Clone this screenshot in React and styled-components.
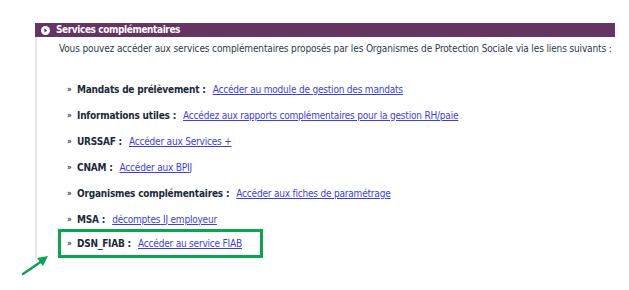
import React from 'react'
import styled, { createGlobalStyle } from 'styled-components'

const GlobalStyle = createGlobalStyle`
  body {
    margin: 0;
    background: #fff;
    font-family: "DejaVu Sans Condensed", "DejaVu Sans", Verdana, sans-serif;
    font-size: 10px;
    letter-spacing: -0.2px;
  }
`

const Page = styled.div`
  position: relative;
  width: 629px;
  height: 290px;
  padding: 23px 0 0 35px;
  box-sizing: border-box;
`

const Header = styled.div`
  width: 580px;
  height: 14px;
  background-color: #653462;
  color: #fff;
  font-weight: bold;
  letter-spacing: -0.4px;
  display: flex;
  align-items: center;
  gap: 6px;
  padding-left: 6px;
  box-sizing: border-box;
`

const HeaderTitle = styled.span`
  line-height: 14px;
`

const Section = styled.div`
  border-left: 2px solid #e9e3ef;
  padding: 5px 0 0 22px;
  height: 221px;
  box-sizing: border-box;
`

const Intro = styled.p`
  margin: 0;
  line-height: 14px;
  color: #2f3b4b;
  white-space: nowrap;
  letter-spacing: -0.13px;
`

const List = styled.ul`
  list-style: none;
  margin: 20px 0 0 -1px;
  padding: 0;
`

const Item = styled.li`
  height: ${props => (props.highlight ? '29px' : '26px')};
  margin-top: ${props => (props.highlight ? '-3px' : '0')};
  display: ${props => (props.highlight ? 'inline-flex' : 'flex')};
  align-items: center;
  padding: ${props => (props.highlight ? '0 18px 0 6px' : '0 0 0 9px')};
  border: ${props => (props.highlight ? '3px solid #0aa64f' : 'none')};
  box-sizing: border-box;
`

const Bullet = styled.span`
  font-size: 8px;
  font-weight: bold;
  color: #34405a;
  width: 10px;
`

const Label = styled.strong`
  color: #1b2a3a;
  margin-right: 7px;
`

const Link = styled.a`
  color: #3d3de8;
  text-decoration: underline;
`

const Arrow = styled.svg`
  position: absolute;
  left: 20px;
  top: 253px;
`

const CircleIcon = () => (
  <svg width="9" height="9" viewBox="0 0 9 9">
    <circle cx="4.5" cy="4.5" r="4.5" fill="#fff" />
    <path d="M3.4 2.6 L6.2 4.5 L3.4 6.4 Z" fill="#653462" />
  </svg>
)

const services = [
  { label: 'Mandats de prélèvement :', link: 'Accéder au module de gestion des mandats' },
  { label: 'Informations utiles :', link: 'Accédez aux rapports complémentaires pour la gestion RH/paie' },
  { label: 'URSSAF :', link: 'Accéder aux Services +' },
  { label: 'CNAM :', link: 'Accéder aux BPIJ' },
  { label: 'Organismes complémentaires :', link: 'Accéder aux fiches de paramétrage' },
  { label: 'MSA :', link: 'décomptes IJ employeur' },
  { label: 'DSN_FIAB :', link: 'Accéder au service FIAB', highlight: true },
]

export default function App() {
  return (
    <Page>
      <GlobalStyle />
      <Header>
        <CircleIcon />
        <HeaderTitle>Services complémentaires</HeaderTitle>
      </Header>
      <Section>
        <Intro>
          Vous pouvez accéder aux services complémentaires proposés par les
          Organismes de Protection Sociale via les liens suivants :
        </Intro>
        <List>
          {services.map(s => (
            <Item key={s.label} highlight={s.highlight}>
              <Bullet>»</Bullet>
              <Label>{s.label}</Label>
              <Link href="#">{s.link}</Link>
            </Item>
          ))}
        </List>
      </Section>
      <Arrow width="32" height="26" viewBox="0 0 32 26">
        <line x1="3" y1="21" x2="22" y2="8" stroke="#0aa64f" strokeWidth="2.5" strokeLinecap="round" />
        <path d="M28 3 L17 5 L23 13 Z" fill="#0aa64f" />
      </Arrow>
    </Page>
  )
}
